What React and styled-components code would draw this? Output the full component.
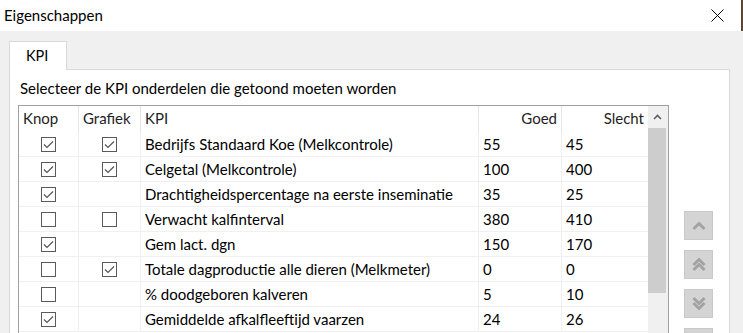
import React from 'react';
import styled, { createGlobalStyle } from 'styled-components';

const Global = createGlobalStyle`
  html, body { margin: 0; padding: 0; background: #f0f0f0; }
  body { font-family: Lato, "Noto Sans", sans-serif; }
  * { box-sizing: border-box; }
`;

const Window = styled.div`
  width: 743px;
  height: 333px;
  overflow: hidden;
  display: flex;
  flex-direction: column;
  background: #f0f0f0;
  font-family: Lato, "Noto Sans", sans-serif;
  color: #000;
`;

const TitleBar = styled.div`
  height: 31px;
  flex: none;
  background: #fff;
  display: flex;
  align-items: center;
  justify-content: space-between;
  padding-left: 4px;
  border-right: 2px solid #5f4633;
`;

const Title = styled.div`
  font-size: 15px;
  margin-top: -2px;
`;

const CloseBtn = styled.div`
  width: 46px;
  height: 31px;
  display: flex;
  align-items: center;
  justify-content: center;
  margin-right: 1px;
`;

const Content = styled.div`
  flex: 1;
  display: flex;
  flex-direction: column;
  padding: 10px 13px 0 9px;
  min-height: 0;
`;

const TabStrip = styled.div`
  display: flex;
  height: 28px;
  flex: none;
`;

const Tab = styled.div`
  width: 58px;
  height: 29px;
  background: #fff;
  border: 1px solid #d9d9d9;
  border-bottom: none;
  font-size: 14.5px;
  padding: 5px 0 0 16px;
  position: relative;
  z-index: 1;
`;

const Panel = styled.div`
  flex: 1;
  background: #fff;
  border: 1px solid #d9d9d9;
  border-bottom: none;
  padding: 10px 0 0 8px;
  min-height: 0;
`;

const Label = styled.div`
  font-size: 15px;
  line-height: 17px;
  margin-left: 2px;
  height: 25px;
  white-space: nowrap;
`;

const Body = styled.div`
  display: flex;
  align-items: flex-start;
`;

const Table = styled.div`
  width: 651px;
  height: 260px;
  border: 1px solid #a0a0a0;
  border-bottom: none;
  display: flex;
`;

const Grid = styled.div`
  width: 629px;
  display: grid;
  grid-template-columns: 60px 62px 338px 83px 86px;
  grid-auto-rows: 25px;
  grid-template-rows: 26px;
  align-content: start;
`;

const HeadCell = styled.div`
  font-size: 15px;
  color: #1e1e1e;
  display: flex;
  align-items: center;
  padding-bottom: 2px;
  justify-content: ${p => (p.$right ? 'flex-end' : 'flex-start')};
  padding-left: 4px;
  padding-right: ${p => (p.$right ? '4px' : '0')};
  border-right: ${p => (p.$last ? 'none' : '1px solid #e5e5e5')};
  white-space: nowrap;
`;

const Cell = styled.div`
  font-size: 15px;
  display: flex;
  align-items: center;
  justify-content: ${p => (p.$center ? 'center' : 'flex-start')};
  padding-left: ${p => (p.$center ? '0' : '4px')};
  border-bottom: 1px solid #f0f0f0;
  border-right: ${p => (p.$last ? 'none' : '1px solid #f0f0f0')};
  white-space: nowrap;
  overflow: hidden;
`;

const ScrollBar = styled.div`
  width: 20px;
  display: flex;
  flex-direction: column;
  background: #f0f0f0;
`;

const ScrollArrow = styled.div`
  height: 22px;
  display: flex;
  align-items: center;
  justify-content: center;
  padding-right: 2px;
`;

const Thumb = styled.div`
  width: 18px;
  height: 165px;
  background: #cdcdcd;
`;

const ButtonCol = styled.div`
  display: flex;
  flex-direction: column;
  gap: 10px;
  margin-left: 15px;
  margin-top: 106px;
`;

const MoveButton = styled.div`
  width: 29px;
  height: 29px;
  background: #d4d4d4;
  border: 1px solid #c9c9c9;
  display: flex;
  align-items: center;
  justify-content: center;
`;

const Box = styled.div`
  width: 15px;
  height: 15px;
  border: 1px solid #5a5a5a;
  background: #fff;
  display: flex;
  align-items: center;
  justify-content: center;
`;

const Check = ({ on }) => (
  <Box>
    {on && (
      <svg width="13" height="13" viewBox="0 0 13 13">
        <path d="M2 6.5 L5 9.5 L11 3.5" fill="none" stroke="#555" strokeWidth="1.2" />
      </svg>
    )}
  </Box>
);

const Chevron = ({ dir = 'up', double = false }) => {
  const up = dir === 'up';
  const single = (y) =>
    up ? `M1.5 ${y + 6} L7 ${y + 0.5} L12.5 ${y + 6}` : `M1.5 ${y} L7 ${y + 5.5} L12.5 ${y}`;
  return (
    <svg width="14" height="16" viewBox="0 0 14 16">
      {double ? (
        <>
          <path d={single(2)} fill="none" stroke="#a3a3a3" strokeWidth="3" />
          <path d={single(7)} fill="none" stroke="#a3a3a3" strokeWidth="3" />
        </>
      ) : (
        <path d={single(5)} fill="none" stroke="#a3a3a3" strokeWidth="3" />
      )}
    </svg>
  );
};

const rows = [
  { knop: true, graf: true, kpi: 'Bedrijfs Standaard Koe (Melkcontrole)', goed: '55', slecht: '45' },
  { knop: true, graf: true, kpi: 'Celgetal (Melkcontrole)', goed: '100', slecht: '400' },
  { knop: true, graf: null, kpi: 'Drachtigheidspercentage na eerste inseminatie', goed: '35', slecht: '25' },
  { knop: false, graf: false, kpi: 'Verwacht kalfinterval', goed: '380', slecht: '410' },
  { knop: true, graf: null, kpi: 'Gem lact. dgn', goed: '150', slecht: '170' },
  { knop: false, graf: true, kpi: 'Totale dagproductie alle dieren (Melkmeter)', goed: '0', slecht: '0' },
  { knop: false, graf: null, kpi: '% doodgeboren kalveren', goed: '5', slecht: '10' },
  { knop: true, graf: null, kpi: 'Gemiddelde afkalfleeftijd vaarzen', goed: '24', slecht: '26' },
];

export default function App() {
  return (
    <Window>
      <Global />
      <TitleBar>
        <Title>Eigenschappen</Title>
        <CloseBtn>
          <svg width="13" height="13" viewBox="0 0 13 13">
            <path d="M0.5 0.5 L12.5 12.5 M12.5 0.5 L0.5 12.5" stroke="#000" strokeWidth="1" />
          </svg>
        </CloseBtn>
      </TitleBar>
      <Content>
        <TabStrip>
          <Tab>KPI</Tab>
        </TabStrip>
        <Panel>
          <Label>Selecteer de KPI onderdelen die getoond moeten worden</Label>
          <Body>
            <Table>
              <Grid>
                <HeadCell>Knop</HeadCell>
                <HeadCell>Grafiek</HeadCell>
                <HeadCell>KPI</HeadCell>
                <HeadCell $right>Goed</HeadCell>
                <HeadCell $right $last>Slecht</HeadCell>
                {rows.map((r, i) => (
                  <React.Fragment key={i}>
                    <Cell $center><Check on={r.knop} /></Cell>
                    <Cell $center>{r.graf !== null && <Check on={r.graf} />}</Cell>
                    <Cell>{r.kpi}</Cell>
                    <Cell>{r.goed}</Cell>
                    <Cell $last>{r.slecht}</Cell>
                  </React.Fragment>
                ))}
              </Grid>
              <ScrollBar>
                <ScrollArrow>
                  <svg width="9" height="6" viewBox="0 0 9 6">
                    <path d="M1 5 L4.5 1.5 L8 5" fill="none" stroke="#606060" strokeWidth="1.6" />
                  </svg>
                </ScrollArrow>
                <Thumb />
              </ScrollBar>
            </Table>
            <ButtonCol>
              <MoveButton><Chevron dir="up" /></MoveButton>
              <MoveButton><Chevron dir="up" double /></MoveButton>
              <MoveButton><Chevron dir="down" double /></MoveButton>
              <MoveButton><Chevron dir="down" /></MoveButton>
            </ButtonCol>
          </Body>
        </Panel>
      </Content>
    </Window>
  );
}
